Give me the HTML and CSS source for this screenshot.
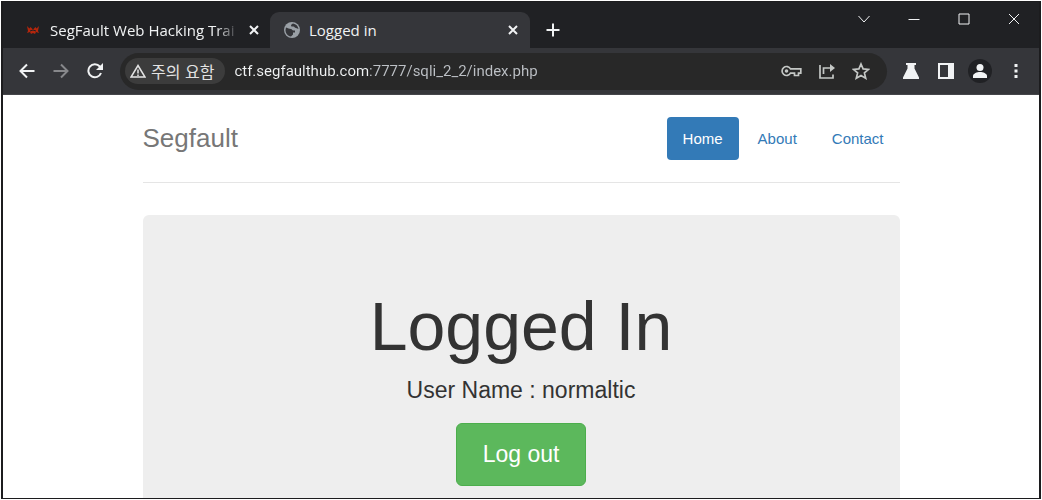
FILE: index.html
```html
<!DOCTYPE html>
<html lang="en">
<head>
  <meta charset="UTF-8" />
  <meta name="viewport" content="width=device-width, initial-scale=1" />
  <title>Logged in</title>
  <link rel="stylesheet" href="styles.css">
</head>
<body>
  <div class="window">
    <div class="tabstrip">
      <div class="tab">
        <svg class="favicon" viewBox="0 0 16 16" width="16" height="16"><path d="M2 4l2.500 2.500L5.500 5 8 7.500 10.500 5l1 1.500L14 4l-1 5 1 2-3-1-1 2-2-1-2 1-1-2-3 1 1-2z" fill="#b3260c"/><path d="M5 9l3-1 3 1" stroke="#202124" fill="none"/></svg>
        <span class="tab-title fade">SegFault Web Hacking Trai</span>
        <button class="tab-close" aria-label="Close tab"><svg viewBox="0 0 10 10" width="10" height="10"><path d="M1 1l8 8M9 1l-8 8" stroke="currentColor" stroke-width="2"/></svg></button>
      </div>
      <div class="tab active">
        <svg class="favicon" viewBox="0 0 16 16" width="16" height="16"><circle cx="8" cy="8" r="8" fill="#9aa0a6"/><path d="M2 5.500c2 .5 3 1.500 5 1.500 1 0 1 1.500 2.500 1.500H11v2H9v2l-2 2C3.500 14 1.500 11 1.500 8zM9 1.500c-2 1-2.500 2-1.500 3h2c1 0 1 1.500 2.500 1.500l2.500 1C14 4 12 2 9 1.500z" fill="#35363a"/></svg>
        <span class="tab-title">Logged in</span>
        <button class="tab-close" aria-label="Close tab"><svg viewBox="0 0 10 10" width="10" height="10"><path d="M1 1l8 8M9 1l-8 8" stroke="currentColor" stroke-width="2"/></svg></button>
      </div>
      <button class="new-tab" aria-label="New tab"><svg viewBox="0 0 14 14" width="14" height="14"><path d="M7 0.500v13M0.500 7h13" stroke="currentColor" stroke-width="2"/></svg></button>
      <div class="window-controls">
        <button aria-label="Search tabs"><svg viewBox="0 0 12 12" width="12" height="12"><path d="M0.500 3l5.500 6 5.500-6" stroke="currentColor" fill="none"/></svg></button>
        <button aria-label="Minimize"><svg viewBox="0 0 12 12" width="12" height="12"><path d="M0.500 6.500h11" stroke="currentColor"/></svg></button>
        <button aria-label="Maximize"><svg viewBox="0 0 12 12" width="12" height="12"><path d="M1 1h10v10H1z" stroke="currentColor" fill="none"/></svg></button>
        <button aria-label="Close"><svg viewBox="0 0 12 12" width="12" height="12"><path d="M1 1l10 10M11 1L1 11" stroke="currentColor"/></svg></button>
      </div>
    </div>

    <div class="toolbar">
      <div class="nav-buttons">
        <button aria-label="Back"><svg viewBox="0 0 16 16" width="16" height="16"><path d="M15.500 8H2M8 1.500L1.500 8 8 14.500" stroke="currentColor" stroke-width="2" fill="none"/></svg></button>
        <button class="dim" aria-label="Forward"><svg viewBox="0 0 16 16" width="16" height="16"><path d="M0.500 8H14M8 1.500L14.500 8 8 14.500" stroke="currentColor" stroke-width="2" fill="none"/></svg></button>
        <button aria-label="Reload"><svg viewBox="0 0 16 16" width="16" height="16"><path d="M14 10A6.500 6.500 0 1 1 12.800 3.500L14 5" stroke="currentColor" stroke-width="2" fill="none"/><path d="M16 0v7H9z" fill="currentColor"/></svg></button>
      </div>
      <div class="omnibox">
        <button class="chip">
          <svg viewBox="0 0 16 14" width="16" height="14"><path d="M8 1.500L15 13H1z" stroke="currentColor" stroke-width="1.500" fill="none"/><path d="M8 5.500v4M8 10.500v1.500" stroke="currentColor" stroke-width="1.500"/></svg>
          <span lang="ko">주의 요함</span>
        </button>
        <input class="url" type="text" aria-label="Address" value="ctf.segfaulthub.com:7777/sqli_2_2/index.php" />
        <button aria-label="Saved passwords"><svg viewBox="0 0 21 12" width="21" height="12"><path d="M9.500 3.800A4.500 4.500 0 1 0 9.500 8.200H13.500V10.500H17.500V8.200H19.800V3.800z" stroke="currentColor" stroke-width="1.700" fill="none"/><circle cx="5.500" cy="6" r="1.800" fill="currentColor"/></svg></button>
        <button aria-label="Share"><svg viewBox="0 0 16 16" width="16" height="16"><path d="M1 2v13h13v-3.500M4.500 11V5H13" stroke="currentColor" stroke-width="1.700" fill="none"/><path d="M11 1l5 4-5 4z" fill="currentColor"/></svg></button>
        <button aria-label="Bookmark"><svg viewBox="0 0 18 18" width="18" height="18"><path d="M9 2l2.100 4.900 5.400.5-4.100 3.500 1.300 5.300L9 13.400l-4.700 2.800 1.300-5.300L1.500 7.400l5.400-.5z" stroke="currentColor" stroke-width="1.700" fill="none"/></svg></button>
      </div>
      <div class="actions">
        <button aria-label="Experiments"><svg viewBox="0 0 16 16" width="16" height="16"><path d="M3 0h10v2h-1.500v3.500L16 14.500V16H0v-1.500L4.500 5.500V2H3z" fill="currentColor"/></svg></button>
        <button aria-label="Side panel"><svg viewBox="0 0 16 16" width="16" height="16"><path fill-rule="evenodd" d="M0 0h16v16H0zM2 2v12h8V2z" fill="currentColor"/></svg></button>
        <button class="avatar" aria-label="Profile"><svg viewBox="0 0 14 14" width="14" height="14"><circle cx="7" cy="3.500" r="3.500" fill="currentColor"/><path d="M0 14v-2c0-2.500 4-4 7-4s7 1.500 7 4v2z" fill="currentColor"/></svg></button>
        <button class="menu" aria-label="Menu"><svg viewBox="0 0 4 16" width="4" height="16"><path d="M.5 1h3v3h-3zM.5 6.500h3v3h-3zM.5 12h3v3h-3z" fill="currentColor"/></svg></button>
      </div>
    </div>

    <div class="page">
      <div class="container">
        <div class="header">
          <h3>Segfault</h3>
          <nav class="nav-pills">
            <a class="active" href="#">Home</a>
            <a href="#">About</a>
            <a href="#">Contact</a>
          </nav>
        </div>

        <div class="jumbotron">
          <h1>Logged In</h1>
          <p>User Name : normaltic</p>
          <a class="btn-success" href="#" role="button">Log out</a>
        </div>
      </div>
    </div>
  </div>
</body>
</html>
```
FILE: styles.css
```css
* {
  box-sizing: border-box;
}
body {
  margin: 0;
  padding: 1px;
  background-color: #fff;
  font-family: "Liberation Sans", Arial, sans-serif;
}
button {
  display: flex;
  align-items: center;
  justify-content: center;
  padding: 0;
  border: none;
  background: none;
  color: inherit;
  cursor: pointer;
}
svg {
  flex: none;
}
.window {
  display: flex;
  flex-direction: column;
  height: calc(100vh - 2px);
  border: 1px solid #1c1c1e;
  border-width: 1px 2px;
  overflow: hidden;
}

/* Tabs */
.tabstrip {
  display: flex;
  flex: none;
  height: 46px;
  padding-top: 10px;
  background-color: #202124;
  color: #f1f3f4;
  font-family: "Open Sans", "Noto Sans CJK KR", sans-serif;
  font-size: 15px;
}
.tab {
  display: flex;
  align-items: center;
  width: 260px;
  padding: 0 12px 0 14px;
  border-radius: 9px 9px 0 0;
}
.tab:first-child {
  width: 267px;
  padding: 0 11px 0 22px;
}
.tab.active {
  background-color: #35363a;
}
.favicon {
  margin-right: 9px;
}
.tab-title {
  flex: 1;
  white-space: nowrap;
}
.tab-title.fade {
  mask-image: linear-gradient(to right, #000 88%, transparent);
}
.tab-close {
  width: 10px;
  margin-left: 10px;
}
.new-tab {
  width: 46px;
}
.window-controls {
  display: flex;
  margin-left: auto;
  margin-top: -10px;
  height: 34px;
}
.window-controls button {
  width: 50px;
}

/* Toolbar */
.toolbar {
  display: flex;
  flex: none;
  align-items: center;
  height: 47px;
  padding: 0 15px 0 16px;
  border-bottom: 1px solid #45464a;
  background-color: #35363a;
  color: #f1f3f4;
}
.nav-buttons {
  display: flex;
  gap: 18px;
  margin-right: 17px;
}
.dim {
  color: #87888b;
}
.omnibox {
  display: flex;
  flex: 1;
  align-items: center;
  gap: 17px;
  height: 37px;
  padding: 0 17px 0 5px;
  border-radius: 19px;
  background-color: #282828;
  color: #c4c7c5;
}
.chip {
  gap: 5px;
  height: 26px;
  padding: 0 11px 0 5px;
  border-radius: 13px;
  background-color: #3c3c3c;
  color: #e3e3e3;
  font-family: "Noto Sans CJK KR", sans-serif;
  font-size: 16px;
}
.url {
  flex: 1;
  min-width: 0;
  margin-left: -8px;
  padding: 0;
  border: none;
  outline: none;
  /* host is brighter than the rest of the address */
  background: linear-gradient(to right, #f1f3f4 134px, #bdc1c6 134px);
  background-clip: text;
  color: transparent;
  font-family: Roboto, sans-serif;
  font-size: 15px;
}
.actions {
  display: flex;
  align-items: center;
  gap: 19px;
  margin-left: 16px;
}
.avatar {
  width: 24px;
  height: 24px;
  margin: 0 -3px 0 -5px;
  border-radius: 50%;
  background-color: #202124;
}
.menu {
  width: 16px;
}

/* Page content */
.page {
  flex: 1;
  overflow: hidden;
  background-color: #fff;
  color: #333;
}
.container {
  max-width: 757px;
  margin: 0 auto;
}
.header {
  display: flex;
  align-items: center;
  justify-content: space-between;
  margin-bottom: 32px;
  padding: 22px 0;
  border-bottom: 1px solid #e5e5e5;
}
.header h3 {
  margin: 0;
  color: #777;
  font-size: 26px;
  font-weight: normal;
}
.nav-pills {
  display: flex;
  gap: 3px;
}
.nav-pills a {
  padding: 11px 16px;
  border-radius: 4px;
  color: #337ab7;
  font-size: 15px;
  line-height: 21px;
  text-decoration: none;
}
.nav-pills a.active {
  background-color: #337ab7;
  color: #fff;
}
.jumbotron {
  padding: 74px 16px 52px;
  border-radius: 6px;
  background-color: #eee;
  text-align: center;
}
.jumbotron h1 {
  margin: 0 0 10px;
  font-size: 68px;
  font-weight: normal;
  line-height: 75px;
}
.jumbotron p {
  margin: 0 0 17px;
  font-size: 23px;
  line-height: 32px;
}
.btn-success {
  display: inline-block;
  padding: 15px 26px;
  border: 1px solid #4cae4c;
  border-radius: 6px;
  background-color: #5cb85c;
  color: #fff;
  font-size: 23px;
  line-height: 31px;
  text-decoration: none;
}
```
